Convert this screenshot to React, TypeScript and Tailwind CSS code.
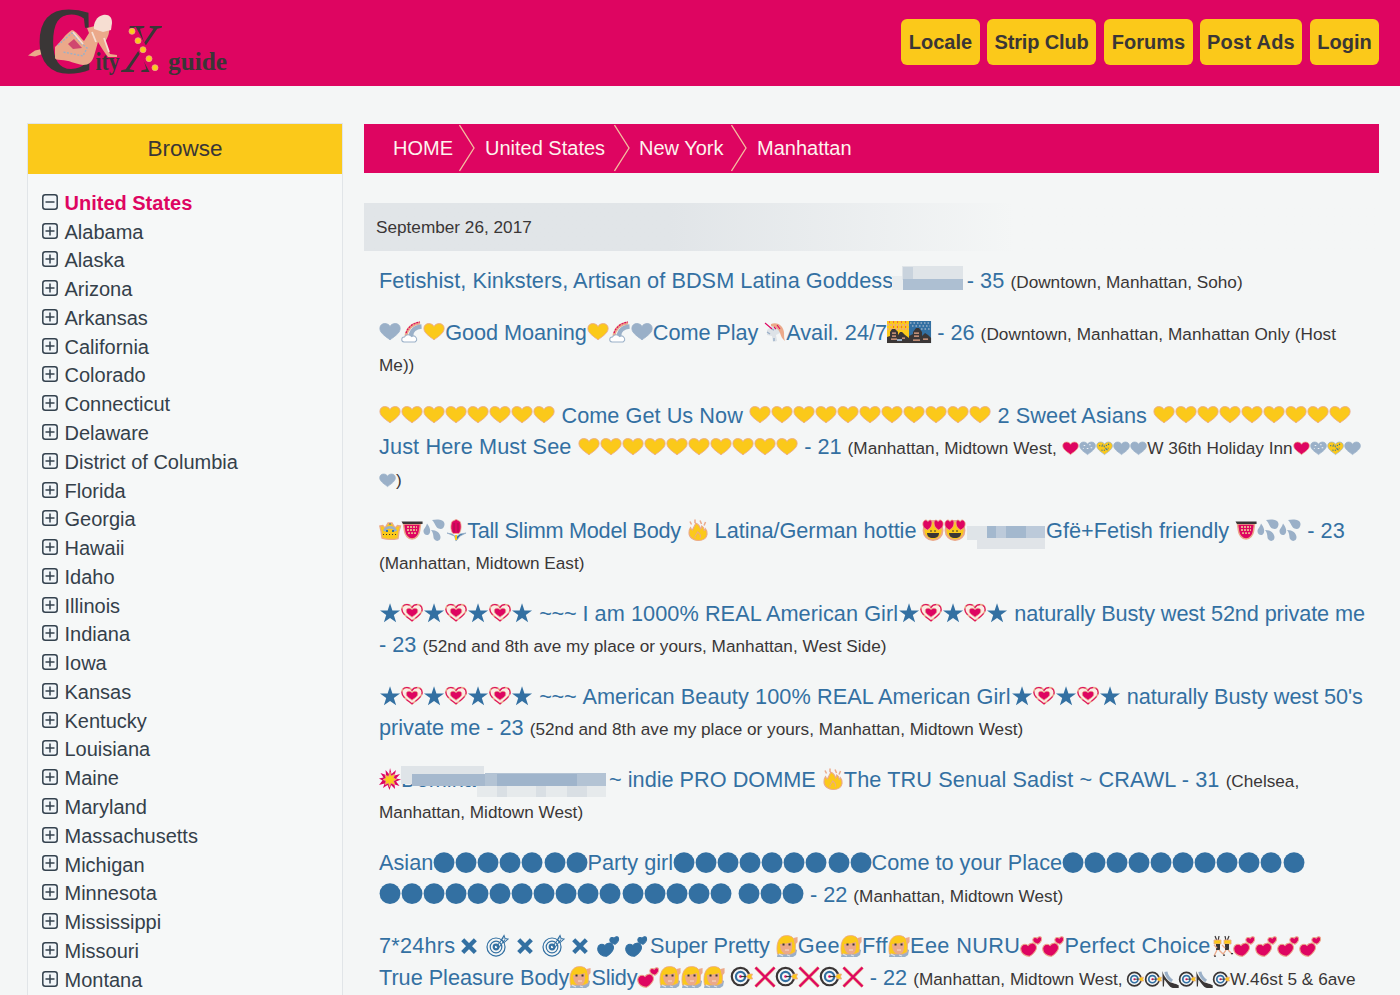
import React from "react";

const BLUE = "#3370a2";
const GREY = "#9ab0c8";
const GOLD = "#fbc91a";
const PINK = "#de0561";
const SKIN = "#eba98a";
const DARK = "#3a3636";

const HEART = "M11 18.8C8 16.2.9 12.500.9 7.500.9 4.500 3 2.600 5.900 2.600c2.200 0 4.100 1 5.100 2.900 1-1.900 2.900-2.900 5.100-2.900 2.900 0 5 1.900 5 4.900 0 5-7.100 8.700-10.100 11.300z";

function Heart({ fill, edge }: { fill: string; edge?: string }) {
  return <path d={HEART} fill={fill} stroke={edge ?? fill} strokeWidth=".9" />;
}

function TwoHearts({ fill, edge }: { fill: string; edge: string }) {
  return (
    <g stroke={edge} strokeWidth="1" fill={fill}>
      <path d="M9.600 21.300C6 21.200.6 19 .7 13.500.8 9.800 5.200 7.600 8 10.500 9.500 7.900 13.600 7 15.700 9.900c2.600 4.100-2.100 8.900-6.100 11.400z" />
      <path d="M18 9.200c-2.300-.6-5.500-1.900-5.200-4.700.3-2.200 3-2.800 4.300-1.200.7-1.700 3.600-2.400 4.300-.5.8 2.400-1.400 5-3.400 6.400z" />
    </g>
  );
}

const drawings: Record<string, React.ReactNode> = {
  y: <Heart fill={GOLD} edge={SKIN} />,
  g: <Heart fill={GREY} />,
  r: <Heart fill={PINK} edge={SKIN} />,
  s: (
    <g>
      <Heart fill={GREY} />
      <path d="M6 7h2M13 6h2M10 11h2M5 11h1M15 10h2" stroke="#eef2f5" strokeWidth="1.300" />
    </g>
  ),
  b: (
    <g>
      <Heart fill={GOLD} edge={GREY} />
      <path d="M4 7c5 2 9 1 13-2M7 13c3 1 6 0 9-3M8 6l7 7" stroke={BLUE} strokeWidth="1.300" strokeDasharray="1.500 1.500" fill="none" />
    </g>
  ),
  rainbow: (
    <g fill="none">
      <path d="M5 15C6 7 11 3 19 2" stroke={SKIN} strokeWidth="3" />
      <path d="M5 12C7 6 12 2 19 1" stroke={PINK} strokeWidth="1.200" strokeDasharray="2 1" />
      <path d="M10 15C10 10 14 6 20.500 5.500" stroke={GREY} strokeWidth="4.500" />
      <path d="M3 21a2.500 2.500 0 0 1 .5-5 4 4 0 0 1 7-.5 3 3 0 0 1 3.500 5.500z" fill="#fff" stroke={GREY} strokeWidth="1" />
    </g>
  ),
  unicorn: (
    <g>
      <path d="M3 9l6-5 4-1 4 4-1 5-4 2 1 6-4 1-1-6-5-1z" fill="#dde2e7" />
      <path d="M7 3c7-3 13 3 13 9 0 3 0 6 1 8-3-2-4-5-5-8S12 6 7 5z" fill={SKIN} />
      <path d="M1 2l7 6M10 6l2 2M13 4l3 4" stroke={PINK} strokeWidth="1.100" />
      <path d="M3 11l3 2M8 8l2 1M10 17v3" stroke={GREY} strokeWidth="1.400" />
    </g>
  ),
  dusk: (
    <g>
      <path d="M0 0h22v22H0z" fill={GOLD} />
      <path d="M0 4h22M0 8h22" stroke={SKIN} strokeWidth="1.500" strokeDasharray="2 1" />
      <path d="M2 1h20M6 6h16" stroke={PINK} strokeWidth="1" strokeDasharray="1 3" />
      <path d="M0 22v-6l3-1v-4l2-3h3l3 3v3l2-3h2l3 3 4 3v5z" fill={DARK} />
      <path d="M5 12h4M5 15h4M4 18h6M15 17h3" stroke={SKIN} strokeWidth="1.200" />
      <path d="M10 19h5" stroke={GREY} strokeWidth="2" />
    </g>
  ),
  night: (
    <g>
      <path d="M0 0h22v22H0z" fill={BLUE} />
      <path d="M1 2h20M3 5h18M12 8h9" stroke={GREY} strokeWidth="1.500" strokeDasharray="1.500 2" />
      <path d="M0 22v-7l4-2v-2l3-4h3l3 4v4l3-3 3 2 3 3v5z" fill={DARK} />
      <path d="M5 12h5M5 15h5M4 19h7M14 18h5" stroke={SKIN} strokeWidth="1.200" />
    </g>
  ),
  crown: (
    <g>
      <path d="M3 19L2 12 .8 7l3-.5L6 9l3-5h4l3 5 2.500-2.500 3 .5L20 12l-1 7.500c-5 1.200-11 1.200-16-.5z" fill={GOLD} stroke={SKIN} strokeWidth="1.300" />
      <path d="M5 12c3-5 9-5 12 0" stroke={GREY} strokeWidth="2.500" fill="none" />
      <path d="M7 12h2M13 12h2M10.500 5h1" stroke={BLUE} strokeWidth="1.800" />
      <path d="M4 15.500h14" stroke={DARK} strokeDasharray="1 2" />
    </g>
  ),
  mouth: (
    <g>
      <path d="M2.500 5h17l-1 7c-.5 4-3.500 8-7.500 8s-7-4-7.500-8z" fill={PINK} stroke={SKIN} strokeWidth="1.500" />
      <path d="M6 8h10M6 11h10M7 14h8" stroke={SKIN} strokeWidth="1.800" strokeDasharray="2 1" />
      <path d="M.5 2.500h21v2.500H2z" fill={DARK} />
    </g>
  ),
  drops: (
    <g fill={GREY}>
      <path d="M9 1c5-1 12-1 12.500 4 0 4-3 6-6 4.500-3-1-3-5-6.500-8.500z" />
      <path d="M4 4.500c3 4 4 7 2.500 10-2 3-6 1-6-2 0-3 2.500-4 3.500-8z" />
      <path d="M8 11c6 0 9 3 9.500 7 0 4-4 5-6 2.500-2-2 0-5-3.500-9.500z" />
    </g>
  ),
  tulip: (
    <g>
      <path d="M11 22l-1.500-5L2 14l5 1 4 3 4-3 6-1-6 3z" fill={BLUE} stroke={GREY} strokeWidth=".8" />
      <path d="M11 16v5" stroke={GOLD} strokeWidth="2" />
      <path d="M11 .5c1 0 2 1 4 2 2 4 1 10-1 12h-6C6 12.500 5 7 7 2.500z" fill={PINK} stroke={SKIN} strokeWidth=".8" />
      <path d="M9 4v9M13 4v9" stroke="#9e1445" strokeWidth=".9" />
    </g>
  ),
  fire: (
    <g>
      <path d="M2 14c0-2 .3-4 1.500-5.500.5 1.500 1 2.200 2 2.500C6 8.500 8.500 6.500 8.500 4c2.500 1 4.500 3.200 5 6 .9-.6 1.200-1.800 1.200-3 2 1 2.300 2.500 2.500 4.500.8-.3 1-1 1.100-2 1.500 1.500 2 3.500 1.700 6-.6 4-4.500 6-8.800 6S2 18.700 2 14z" fill={GOLD} stroke={SKIN} strokeWidth="1.100" />
      <path d="M3 2.500l1.500 3M8 .5V4M13 1.500l1.500 3.500M18.500 3L17 6.500" stroke={SKIN} strokeWidth="1.500" />
      <path d="M8 19c-1-3 2-3 2.500-6 3 2 3.500 4 2.500 6" stroke={SKIN} fill="none" />
    </g>
  ),
  love: (
    <g>
      <circle cx="11" cy="11.500" r="9.500" fill={GOLD} stroke={SKIN} strokeWidth="1.800" />
      <path d="M5.500 11C1 9 .5 6 1 3.500 3-.5 5 1 6 2.500 8 0 10 1 10 4s-1.500 5-4.500 7zM16.500 11c4.500-2 5-5 4.500-7.500-2-4-4-2.500-5-1-2-2.500-4-1.500-4 1.500s1.500 5 4.500 7z" fill={PINK} stroke={SKIN} strokeWidth=".8" />
      <path d="M5 14h12c0 3-2 5-6 5s-6-2-6-5z" fill={DARK} />
      <path d="M8 12h2M12 12h2" stroke={DARK} strokeWidth="1" />
    </g>
  ),
  star: <path d="M11 1.200l2.400 7.300h7.600l-6.200 4.500 2.300 7.300L11 15.900l-6.100 4.400L7.200 13 1 8.500h7.600z" fill={BLUE} />,
  deco: (
    <g>
      <path d={HEART} fill="#fbece6" stroke={SKIN} strokeWidth="1.600" />
      <path d={HEART} fill="none" stroke={PINK} strokeWidth="1" strokeDasharray="7 2.500" />
      <path d="M11 15.200c-2-2-5.800-3.300-5.800-6.200 0-3.600 4.300-3.200 5.800-1.300 1.500-1.900 5.800-2.300 5.800 1.300 0 2.900-3.800 4.200-5.800 6.200z" fill={PINK} stroke={SKIN} strokeWidth=".8" />
    </g>
  ),
  boom: (
    <g>
      <path d="M11 0l1.500 6L17 2l-1.500 5.500L21 6l-4 4.500 5 1-5 2 3.500 4.500-5-1.500L16 21l-4-4-1.500 5L8.500 17 4 20l1.500-4.500L0 17l3.500-4.500L0 10.500l4.500-1L1.500 5 7 7 6.500 2l3.500 4z" fill={PINK} />
      <path d="M11 4l1 4 4-2-1.500 4 3 1.500-3 1.500 1.500 4-4-2-1.500 4-1-4-3.500 1.500 1-3.500-3-1.500 3-1.500L6 7l3.500 1.500z" fill={GOLD} stroke={SKIN} strokeWidth=".6" />
    </g>
  ),
  dot: <circle cx="11" cy="10.600" r="10.400" fill={BLUE} />,
  cross: <path d="M4.700 4.800L17.300 17.500M17.300 4.800L4.700 17.500" stroke={BLUE} strokeWidth="4.300" />,
  aim: (
    <g fill="none" stroke={BLUE} strokeWidth="1.200">
      <circle cx="10" cy="12" r="9" />
      <circle cx="10" cy="12" r="5.800" />
      <circle cx="10" cy="12" r="2.300" strokeWidth="2.200" />
      <path d="M10.500 11.500l7-9M12.500 13l6.500-8.500M15.500 4.500L18 .5l1 3 3 .5-4 3.500z" strokeWidth="1" />
    </g>
  ),
  pair: <TwoHearts fill={BLUE} edge={BLUE} />,
  love2: <TwoHearts fill={PINK} edge={SKIN} />,
  lady: (
    <g>
      <path d="M1 22l1-5 6-1 6 1 5-3 2 1-1 5-3 2z" fill={GREY} />
      <path d="M1.500 19C0 12 1 .5 10.500.5S20 9 19 17l-4 2H5z" fill={GOLD} stroke={SKIN} strokeWidth=".8" />
      <path d="M4 9c4 0 8-1 12-2 .5 9-1 12-5 12S4 16 4 9z" fill={SKIN} />
      <path d="M6.500 9.500h2M12.500 9.500h2" stroke={DARK} strokeWidth="1.800" />
      <path d="M9 15h4" stroke="#f6ded2" strokeWidth="1" />
      <path d="M17.500 3l4-1v5l-2.500 3z" fill={SKIN} />
      <path d="M3 19l4 2M11 20l3 1" stroke="#dde2e7" />
    </g>
  ),
  bunnies: (
    <g>
      <path d="M4 1l2 5M8 1L7 6M14 1l1 5M18 1l-2 5" stroke={DARK} strokeWidth="1.200" />
      <path d="M3 5h7v4H3zM13 5h7v4h-7z" fill={GOLD} stroke={SKIN} strokeWidth=".8" />
      <path d="M5 9h4v6H5zM14 9h4v6h-4z" fill={DARK} />
      <path d="M6 15l-3 6M8 15l4 4M15 15l-3 4M17 15l4 4M3 10l3 3M11 10l3 3" stroke={SKIN} strokeWidth="1.300" />
      <path d="M3 21h2M12 20h2M20 18.500h2" stroke={DARK} strokeWidth="1.200" />
    </g>
  ),
  target: (
    <g fill="none">
      <circle cx="9.500" cy="10.500" r="8.700" stroke={DARK} strokeWidth="2.200" fill="#f6f8f8" />
      <circle cx="9.500" cy="10.500" r="4.600" stroke={BLUE} strokeWidth="2.200" />
      <circle cx="9.500" cy="10.500" r="1.300" fill={PINK} />
      <path d="M10 10.500h7" stroke={DARK} strokeWidth="1.200" />
      <path d="M15.500 10.500l2-2.500h4l-1 2.500 1 2.500h-4z" fill={GOLD} stroke={SKIN} strokeWidth=".8" />
    </g>
  ),
  x: (
    <g>
      <path d="M1.500 1.500l19 19M20.500 1.500L1.500 20.500" stroke={SKIN} strokeWidth="3.400" />
      <path d="M1.500 1.500l19 19M20.500 1.500L1.500 20.500" stroke={PINK} strokeWidth="2.200" />
    </g>
  ),
  shoe: (
    <g>
      <path d="M.5 0c1 5 4 9 8 13 3 3 9 3 13 5.500V22H14C9 21 6 14 3 11l-.5 9H1z" fill={DARK} />
      <path d="M5 1c1 6 4 9 8 12" stroke={GREY} strokeWidth="4" fill="none" />
    </g>
  ),
};

/* A plain string, or a string with the extra tracking, in px, spread over it. */
type Part = string | [string, number] | { i: string; n?: number } | { m: string; d?: number } | { hide: "a" | "b" | "c" };

function Icons({ name, count, small }: { name: string; count: number; small: boolean }) {
  const wide = name === "cross" || name === "aim" || name === "pair";
  const size = small
    ? "inline-block h-[17.100px] w-[17.100px] align-[-3px] overflow-visible"
    : wide
      ? "mx-[2.900px] inline-block h-[22.050px] w-[22.050px] align-[-3.500px] overflow-visible"
      : "inline-block h-[22.050px] w-[22.050px] align-[-3.500px] overflow-visible";
  return (
    <>
      {Array.from({ length: count }, (_, k) => (
        <svg key={k} viewBox="0 0 22 22" className={size}>
          {drawings[name]}
        </svg>
      ))}
    </>
  );
}

function Redacted({ kind }: { kind: "a" | "b" | "c" }) {
  if (kind === "a")
    return (
      <svg width="67.500" height="24" viewBox="0 0 67.500 24" className="inline-block overflow-visible align-[-2px]">
        <path d="M-1 10h11v14H-1z" fill="#e9edef" />
        <path d="M9 0h61v14H9z" fill="#dfe4e8" />
        <path d="M10 1h10v12H10z" fill="#c9d3dd" />
        <path d="M10 13h60v11H10z" fill="#adbfd2" />
      </svg>
    );
  if (kind === "b")
    return (
      <svg width="79.500" height="26" viewBox="0 0 79.500 26" className="inline-block overflow-visible align-[-12px]">
        <path d="M0 2h20v14H0z" fill="#dfe4e8" />
        <path d="M20 2h58v12H20z" fill="#bccada" />
        <path d="M20 2h9v12h-9zM39 2h20v12H39z" fill="#a3b8ce" />
        <path d="M10 14h68v11H10z" fill="#e0e4e8" />
      </svg>
    );
  return (
    <span className="relative inline-block w-[202px]">
      Domina
      <svg width="206" height="33" viewBox="0 0 206 33" className="absolute top-[2px] left-0 overflow-visible">
        <path d="M0 0h83v8H0z" fill="#dfe4e8" />
        <path d="M0 8h11v10H0z" fill="#dfe4e8" />
        <path d="M11 8h73v12H11z" fill="#a6b9ce" />
        <path d="M84 7h121v13H84z" fill="#b3c3d4" />
        <path d="M96 8h80v12H96z" fill="#9fb4cb" />
        <path d="M76 20h129v11H76z" fill="#e6eaec" />
        <path d="M96 20h10v11H96zM135 20h10v11h-10zM166 20h20v11h-20z" fill="#d9dfe4" />
      </svg>
    </span>
  );
}

function Line({ parts }: { parts: Part[] }) {
  return (
    <div className="h-[31.400px] whitespace-pre">
      {parts.map((p, k) => {
        if (typeof p === "string") return <span key={k}>{p}</span>;
        if (Array.isArray(p))
          return (
            <span key={k} style={{ letterSpacing: p[1] / p[0].length }}>
              {p[0]}
            </span>
          );
        if ("hide" in p) return <Redacted key={k} kind={p.hide} />;
        if ("i" in p) return <Icons key={k} name={p.i} count={p.n ?? 1} small={false} />;
        return (
          <span key={k} className="text-[17.200px] text-[#3a3636]" style={{ letterSpacing: (p.d ?? 0) / p.m.length }}>
            {p.m.split(/(\[\w+\])/).map((t, j) =>
              t.startsWith("[") ? <Icons key={j} name={t.slice(1, -1)} count={1} small /> : t,
            )}
          </span>
        );
      })}
    </div>
  );
}

const girlRow: Part[] = [{ i: "star" }, { i: "deco" }, { i: "star" }, { i: "deco" }, { i: "star" }, { i: "deco" }, { i: "star" }];
const girlEnd: Part[] = [{ i: "star" }, { i: "deco" }, { i: "star" }, { i: "deco" }, { i: "star" }];

const listings: Part[][][] = [
  [[["Fetishist, Kinksters, Artisan of BDSM Latina Goddess", 3], { hide: "a" }, [" - 35 ", 0.5], { m: "(Downtown, Manhattan, Soho)" }]],
  [
    [
      { i: "g" }, { i: "rainbow" }, { i: "y" }, ["Good Moaning", -0.7], { i: "y" }, { i: "rainbow" }, { i: "g" }, ["Come Play ", -0.8],
      { i: "unicorn" }, "Avail. 24/7", { i: "dusk" }, { i: "night" }, " - 26 ", { m: "(Downtown, Manhattan, Manhattan Only (Host", d: 2 },
    ],
    [{ m: "Me))" }],
  ],
  [
    [{ i: "y", n: 8 }, [" Come Get Us Now ", 0.7], { i: "y", n: 11 }, [" 2 Sweet Asians ", 1.3], { i: "y", n: 9 }],
    [
      ["Just Here Must See ", 2.2], { i: "y", n: 10 }, " - 21 ",
      { m: "(Manhattan, Midtown West, [r][s][b][g][g]W 36th Holiday Inn[r][s][b][g]", d: 1.2 },
    ],
    [{ m: "[g])" }],
  ],
  [
    [
      { i: "crown" }, { i: "mouth" }, { i: "drops" }, { i: "tulip" }, ["Tall Slimm Model Body ", -6], { i: "fire" },
      [" Latina/German hottie ", -0.8], { i: "love", n: 2 }, { hide: "b" }, ["Gfë+Fetish friendly ", 0.5], { i: "mouth" }, { i: "drops", n: 2 }, " - 23",
    ],
    [{ m: "(Manhattan, Midtown East)" }],
  ],
  [
    [...girlRow, [" ~~~ ", -1], ["I am 1000% REAL American Girl", 2], ...girlEnd, [" naturally Busty west 52nd private me", -4]],
    ["- 23 ", { m: "(52nd and 8th ave my place or yours, Manhattan, West Side)", d: 1 }],
  ],
  [
    [...girlRow, [" ~~~ ", -1], ["American Beauty 100% REAL American Girl", 3.5], ...girlEnd, [" naturally Busty west 50's", -2]],
    ["private me - 23 ", { m: "(52nd and 8th ave my place or yours, Manhattan, Midtown West)", d: 1 }],
  ],
  [
    [{ i: "boom" }, { hide: "c" }, " ~ indie PRO DOMME ", { i: "fire" }, ["The TRU Senual Sadist ~ CRAWL - 31 ", 3.5], { m: "(Chelsea," }],
    [{ m: "Manhattan, Midtown West)" }],
  ],
  [
    ["Asian", { i: "dot", n: 7 }, "Party girl", { i: "dot", n: 9 }, "Come to your Place", { i: "dot", n: 11 }],
    [{ i: "dot", n: 16 }, " ", { i: "dot", n: 3 }, " - 22 ", { m: "(Manhattan, Midtown West)" }],
  ],
  [
    [
      ["7*24hrs", 1.5], { i: "cross" }, { i: "aim" }, { i: "cross" }, { i: "aim" }, { i: "cross" }, { i: "pair", n: 2 }, ["Super Pretty ", -1],
      { i: "lady" }, ["Gee", 1.2], { i: "lady" }, ["Fff", 1.2], { i: "lady" }, ["Eee NURU", 3], { i: "love2", n: 2 }, ["Perfect Choice", 4],
      { i: "bunnies" }, { i: "love2", n: 4 },
    ],
    [
      ["True Pleasure Body", -0.5], { i: "lady" }, ["Slidy", -1.2], { i: "love2" }, { i: "lady", n: 3 }, " ",
      { i: "target" }, { i: "x" }, { i: "target" }, { i: "x" }, { i: "target" }, { i: "x" }, " - 22 ",
      { m: "(Manhattan, Midtown West, [target][target][shoe][target][shoe][target]W.46st 5 & 6ave", d: 2 },
    ],
  ],
];

const states = [
  "Alabama", "Alaska", "Arizona", "Arkansas", "California", "Colorado", "Connecticut", "Delaware",
  "District of Columbia", "Florida", "Georgia", "Hawaii", "Idaho", "Illinois", "Indiana", "Iowa", "Kansas",
  "Kentucky", "Louisiana", "Maine", "Maryland", "Massachusetts", "Michigan", "Minnesota", "Mississippi",
  "Missouri", "Montana",
];

const links = [
  { label: "Locale", size: "mr-[7px] w-[79px]" },
  { label: "Strip Club", size: "mr-[8px] w-[109px] tracking-[-0.15px]" },
  { label: "Forums", size: "mr-[7px] w-[89px]" },
  { label: "Post Ads", size: "mr-[8px] w-[102px] tracking-[0.25px]" },
  { label: "Login", size: "w-[69px]" },
];

function Toggle({ open }: { open?: boolean }) {
  return (
    <svg width="16" height="16" viewBox="0 0 16 16" className="-mt-[2px] mr-[6.500px] shrink-0" fill="none" stroke="#34424e" strokeWidth="1.500">
      <rect x=".8" y=".8" width="14.400" height="14.400" rx="2.500" fill="#f1f5f8" />
      <path d={open ? "M3.500 8h9" : "M3.500 8h9M8 3.500v9"} />
    </svg>
  );
}

function Chevron() {
  return (
    <svg width="16" height="48" viewBox="0 0 16 48" fill="none" stroke="#f3bfa0" strokeWidth="1.300" className="shrink-0">
      <path d="M.5 1L15 24 .5 47" />
    </svg>
  );
}

function Logo() {
  return (
    <svg width="220" height="86" viewBox="20 0 220 86" className="shrink-0 overflow-visible">
      <path d="M28 55.500l7-5 9-2v5l-9 3z" fill={SKIN} />
      <g fill={DARK} fontFamily="'Liberation Serif', serif">
        <text transform="translate(35.500 73) scale(.88 1)" fontSize="95" fontWeight="700">C</text>
        <text x="95.500" y="70" fontSize="26" fontWeight="700" textLength="24" lengthAdjust="spacingAndGlyphs">ity</text>
        <text transform="translate(123 71.500) scale(.88 1)" fontSize="69" fontStyle="italic">X</text>
        <text x="168" y="70" fontSize="26" fontWeight="700" textLength="59" lengthAdjust="spacingAndGlyphs">guide</text>
      </g>
      <path d="M131.500 29l24 44" stroke={PINK} strokeWidth="9.500" />
      <g fill={GOLD} stroke={SKIN} strokeWidth=".8">
        <circle cx="132" cy="31.300" r="3" />
        <circle cx="138" cy="40.700" r="3" />
        <circle cx="143" cy="49.700" r="3" />
        <circle cx="149" cy="58.700" r="3" />
        <circle cx="155" cy="67.700" r="3" />
      </g>
      <path d="M55 47c6-5 10-13 17-17 4 1 7 6 12 11l5-8-2-5 8-2h14c1 7-1 11-4 16l5 12 7 1v2l-9 0c-4-5-7-10-10-15l-4 14c-2 6-5 9-11 9-8-1-14-5-22-5-4 0-6-1-6-2z" fill={SKIN} />
      <path d="M68 44l6-5 8 9-9 1z" fill="#d0476f" />
      <path d="M94 29c-1-6 3-13 9-14 6-1 9 2 9 8l-1 7-8 2z" fill="#f6ded2" />
      <path d="M58 45l14-12 10 11 5 4-4 8-20-4" fill="none" stroke={GREY} strokeWidth="1.400" strokeDasharray="2 1.500" />
      <path d="M73 32l10 12M92 32l4 10M104 38l5 14" stroke="#f6ded2" strokeWidth="1.800" />
    </svg>
  );
}

export default function App() {
  return (
    <div className="h-[995px] w-[1400px] overflow-hidden bg-[#f4f6f6] font-['Liberation_Sans',Arial,sans-serif]">
      <header className="flex h-[86px] items-start justify-between bg-[#de0561] pr-[21px] pl-5">
        <Logo />
        <nav className="mt-[19px] flex text-[20px] font-bold text-[#3a3636]">
          {links.map((l) => (
            <a key={l.label} className={`flex h-[46px] items-center justify-center rounded-[6px] bg-[#fbc91a] ${l.size}`}>
              {l.label}
            </a>
          ))}
        </nav>
      </header>

      <div className="flex items-start gap-[21px] pt-[37px] pl-[27px]">
        <aside className="h-[900px] w-[316px] shrink-0 border border-[#e1e5e8] bg-[#f6f8f8]">
          <h2 className="flex h-[50px] items-center justify-center bg-[#fbc91a] pb-px text-[22.500px] text-[#3a3636]">Browse</h2>
          <ul className="pt-[14.500px] pl-[14px] text-[20px] text-[#34404a]">
            <li className="flex h-[28.770px] items-center font-bold text-[#de0561]">
              <Toggle open />
              United States
            </li>
            {states.map((s) => (
              <li key={s} className="flex h-[28.770px] items-center">
                <Toggle />
                {s}
              </li>
            ))}
          </ul>
        </aside>

        <main className="w-[1015px] shrink-0 pt-px">
          <div className="flex h-[49px] items-center bg-[#de0561] pb-[2px] pl-[29px] text-[20px] text-[#fdf3ee]">
            <span className="w-[66px]">HOME</span>
            <Chevron />
            <span className="w-[139px] pl-[10px]">United States</span>
            <Chevron />
            <span className="w-[101px] pl-[9px]">New York</span>
            <Chevron />
            <span className="pl-[10px]">Manhattan</span>
          </div>
          <div className="mt-[30px] flex h-[48px] items-center bg-linear-to-r from-[#e1e5e8] from-30% to-[#f4f6f6] to-64% pt-px pl-3 text-[17.200px] text-[#3a3636]">
            September 26, 2017
          </div>
          <div className="flex flex-col gap-[20.400px] pt-[14px] pl-[15px] text-[21.700px] leading-[31.400px] text-[#3370a2]">
            {listings.map((lines, k) => (
              <article key={k}>
                {lines.map((parts, j) => (
                  <Line key={j} parts={parts} />
                ))}
              </article>
            ))}
          </div>
        </main>
      </div>
    </div>
  );
}
